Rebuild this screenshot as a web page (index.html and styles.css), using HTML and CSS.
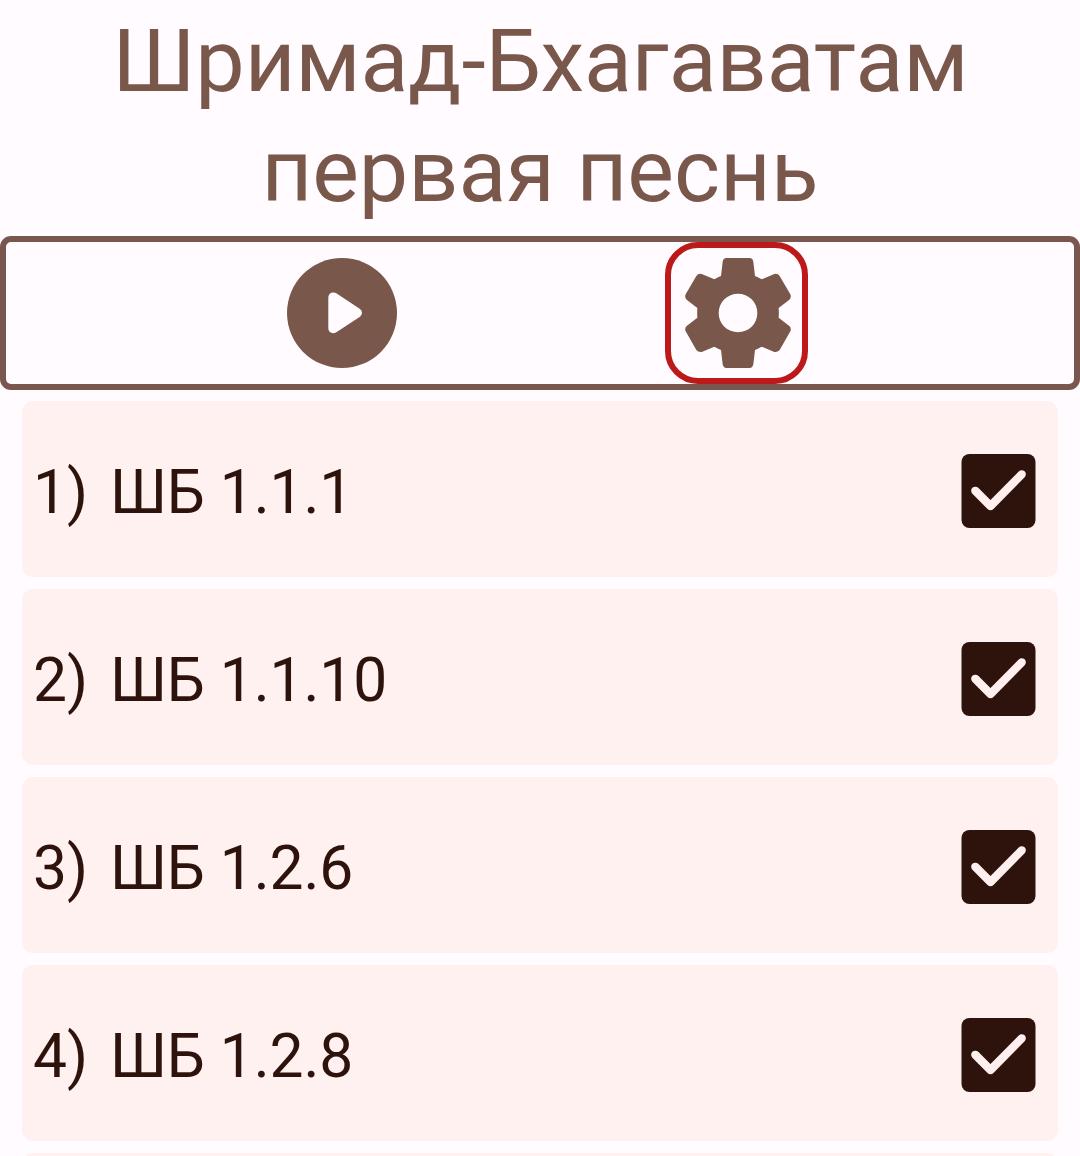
FILE: index.html
```html
<!DOCTYPE html>
<html lang="ru">
<head>
<meta charset="utf-8">
<title>Шримад-Бхагаватам</title>
<link rel="stylesheet" href="styles.css">
</head>
<body>
<svg class="defs" width="0" height="0" aria-hidden="true">
  <symbol id="checkbox" viewBox="0 0 74 74">
    <rect width="74" height="74" rx="8" fill="#2d130c"/>
    <path d="M13.8 36.8 29 52 60.2 20.3" fill="none" stroke="#fff0ef" stroke-width="8.3" stroke-linecap="round" stroke-linejoin="round"/>
  </symbol>
</svg>
<main class="screen">
  <h1 class="title"><span class="book">Шримад-Бхагаватам</span><br>первая песнь</h1>
  <div class="toolbar">
    <svg class="icon" viewBox="81 84 330 330">
      <circle cx="246" cy="249" r="165" fill="#7a574b"/>
      <path d="M205 203C205 190 218 184 229 190L300 237Q312 248 300 260L229 307C218 313 205 308 205 295Z" fill="#fffbff"/>
    </svg>
    <div class="selected">
      <svg class="icon" viewBox="127 99 330 330">
        <path fill="#7a574b" fill-rule="evenodd" d="M260 99H330Q339 99 341 110L346 153Q356 157 366 163L404 147Q415 145 420 153L452 208Q456 217 449 224L417 249Q418 264 417 278L449 303Q456 310 452 319L420 375Q414 382 404 381L366 365Q356 371 346 375L341 418Q339 429 330 429H260Q251 429 249 418L244 375Q234 371 224 365L186 381Q175 382 170 375L138 319Q134 310 141 303L173 278Q172 264 173 249L141 224Q134 217 138 208L170 153Q175 145 186 147L224 163Q234 157 244 153L249 110Q251 99 260 99ZM237 264a58 58 0 1 0 116 0a58 58 0 1 0-116 0Z"/>
      </svg>
    </div>
  </div>
  <div class="list">
    <div class="row"><span class="num">1)</span><span class="name">ШБ 1.1.1</span><svg class="check"><use href="#checkbox"/></svg></div>
    <div class="row"><span class="num">2)</span><span class="name">ШБ 1.1.10</span><svg class="check"><use href="#checkbox"/></svg></div>
    <div class="row"><span class="num">3)</span><span class="name">ШБ 1.2.6</span><svg class="check"><use href="#checkbox"/></svg></div>
    <div class="row"><span class="num">4)</span><span class="name">ШБ 1.2.8</span><svg class="check"><use href="#checkbox"/></svg></div>
    <div class="row"></div>
  </div>
</main>
</body>
</html>
```
FILE: styles.css
```css
* { box-sizing: border-box; }
body {
  margin: 0;
  background: #fffbff;
  font-family: Roboto, sans-serif;
}
.defs { display: none; }
.screen {
  display: flex;
  flex-direction: column;
  height: 1156px;
  overflow: hidden;
}
.title {
  flex: none;
  height: 236px;
  margin: 0;
  padding-top: 6px;
  color: #7a574b;
  font-size: 88px;
  font-weight: 400;
  line-height: 110px;
  text-align: center;
}
.book {
  padding-left: 1px;
  letter-spacing: -0.07px;
}
.toolbar {
  flex: none;
  display: flex;
  align-items: center;
  gap: 268px;
  height: 154px;
  padding-left: 281px;
  border: 6px solid #7a574e;
  border-radius: 11px;
}
.icon {
  display: block;
  flex: none;
  width: 110px;
  height: 110px;
}
.selected {
  display: flex;
  align-items: center;
  justify-content: center;
  width: 143px;
  height: 142px;
  border: 6px solid #bc1a1a;
  border-radius: 33px;
}
.list {
  flex: none;
  display: flex;
  flex-direction: column;
  gap: 12px;
  padding: 11px 22px 0;
}
.row {
  display: flex;
  align-items: center;
  height: 176px;
  padding: 8px 22px 0 11px;
  border-radius: 11px;
  background: #fff1f0;
  color: #2d130c;
  font-size: 60.5px;
  line-height: 88px;
}
.num { width: 77px; }
.name {
  flex: 1;
  letter-spacing: -0.1px;
}
.check {
  width: 75px;
  height: 74px;
  margin-bottom: 4px;
}
```
